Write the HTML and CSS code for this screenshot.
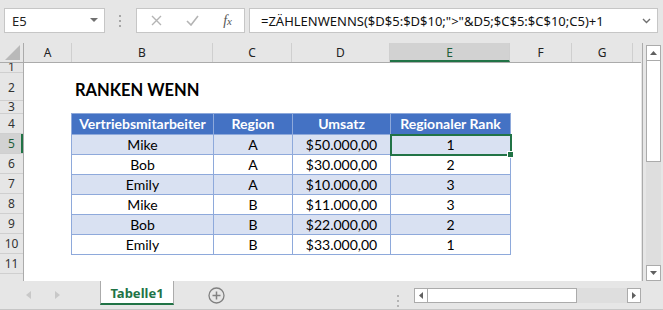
FILE: index.html
```html
<!DOCTYPE html>
<html lang="de">
<head>
    <meta charset="UTF-8">
    <meta name="viewport" content="width=device-width, initial-scale=1.0">
    <title>RANKEN WENN</title>
    <link rel="stylesheet" href="styles.css">
</head>
<body>
    <div class="toolbar">
        <div class="namebox">
            <span>E5</span>
            <svg width="8" height="5" viewBox="0 0 8 5"><path d="M0 0h8L4 4z" fill="#707070"/></svg>
        </div>
        <div class="grip">
            <svg width="3" height="12" viewBox="0 0 3 12"><rect x="0" y="0" width="2" height="2" fill="#a6a6a6"/><rect x="0" y="5" width="2" height="2" fill="#a6a6a6"/><rect x="0" y="10" width="2" height="2" fill="#a6a6a6"/></svg>
        </div>
        <div class="fbtns">
            <svg width="11" height="11" viewBox="0 0 11 11"><path d="M1 1L10 10M10 1L1 10" stroke="#b4b4b4" stroke-width="1.4"/></svg>
            <svg width="13" height="11" viewBox="0 0 13 11"><path d="M1 6L5 10L12 1" stroke="#b4b4b4" stroke-width="1.6" fill="none"/></svg>
            <span class="fx">f<small>x</small></span>
        </div>
        <div class="formula">
            <span>=ZÄHLENWENNS($D$5:$D$10;"&gt;"&amp;D5;$C$5:$C$10;C5)+1</span>
            <svg width="9" height="6" viewBox="0 0 9 6"><path d="M1 1L4.5 4.5L8 1" stroke="#707070" stroke-width="1.4" fill="none"/></svg>
        </div>
    </div>

    <div class="main">
        <div class="sheet">
            <div class="corner">
                <svg width="16" height="15" viewBox="0 0 16 15"><path d="M15 0V15H0z" fill="#b9b9b9"/></svg>
            </div>
            <div class="colheads">
                <div class="ch" style="width:48px">A</div>
                <div class="ch" style="width:141px">B</div>
                <div class="ch" style="width:79px">C</div>
                <div class="ch" style="width:98px">D</div>
                <div class="ch active" style="width:120px">E</div>
                <div class="ch" style="width:62px">F</div>
                <div class="ch" style="width:61px">G</div>
                <div class="ch last"></div>
            </div>
            <div class="rowheads">
                <div class="rh r1">1</div>
                <div class="rh r2">2</div>
                <div class="rh r3">3</div>
                <div class="rh">4</div>
                <div class="rh active">5</div>
                <div class="rh">6</div>
                <div class="rh">7</div>
                <div class="rh">8</div>
                <div class="rh">9</div>
                <div class="rh">10</div>
                <div class="rh">11</div>
                <div class="rh"></div>
            </div>
            <div class="cells">
                <div class="title">RANKEN WENN</div>
                <table class="data">
                    <colgroup>
                        <col style="width:142px">
                        <col style="width:79px">
                        <col style="width:98px">
                        <col style="width:120px">
                    </colgroup>
                    <tr class="head">
                        <th>Vertriebsmitarbeiter</th>
                        <th>Region</th>
                        <th>Umsatz</th>
                        <th>Regionaler Rank</th>
                    </tr>
                    <tr class="band">
                        <td>Mike</td><td>A</td><td>$50.000,00</td><td class="sel">1</td>
                    </tr>
                    <tr>
                        <td>Bob</td><td>A</td><td>$30.000,00</td><td>2</td>
                    </tr>
                    <tr class="band">
                        <td>Emily</td><td>A</td><td>$10.000,00</td><td>3</td>
                    </tr>
                    <tr>
                        <td>Mike</td><td>B</td><td>$11.000,00</td><td>3</td>
                    </tr>
                    <tr class="band">
                        <td>Bob</td><td>B</td><td>$22.000,00</td><td>2</td>
                    </tr>
                    <tr>
                        <td>Emily</td><td>B</td><td>$33.000,00</td><td>1</td>
                    </tr>
                </table>
            </div>
        </div>

        <div class="vscroll">
            <div class="sbtn">
                <svg width="7" height="4" viewBox="0 0 7 4"><path d="M0 4H7L3.5 0z" fill="#606060"/></svg>
            </div>
            <div class="vthumb"></div>
            <div class="track"></div>
            <div class="sbtn">
                <svg width="7" height="4" viewBox="0 0 7 4"><path d="M0 0H7L3.5 4z" fill="#606060"/></svg>
            </div>
        </div>
    </div>

    <div class="tabbar">
        <div class="navs">
            <svg width="5" height="8" viewBox="0 0 5 8"><path d="M5 0V8L0 4z" fill="#c8c8c8"/></svg>
            <svg width="5" height="8" viewBox="0 0 5 8"><path d="M0 0V8L5 4z" fill="#c8c8c8"/></svg>
        </div>
        <div class="tab">Tabelle1</div>
        <div class="addsheet">
            <svg width="17" height="17" viewBox="0 0 17 17"><circle cx="8.5" cy="8.5" r="7.5" fill="none" stroke="#808080" stroke-width="1.3"/><path d="M8.5 4.5V12.5M4.5 8.5H12.5" stroke="#808080" stroke-width="1.5"/></svg>
        </div>
        <div class="grip2">
            <svg width="3" height="12" viewBox="0 0 3 12"><rect x="0" y="0" width="2" height="2" fill="#b4b4b4"/><rect x="0" y="5" width="2" height="2" fill="#b4b4b4"/><rect x="0" y="10" width="2" height="2" fill="#b4b4b4"/></svg>
        </div>
        <div class="hscroll">
            <div class="sbtn">
                <svg width="4" height="7" viewBox="0 0 4 7"><path d="M4 0V7L0 3.5z" fill="#606060"/></svg>
            </div>
            <div class="hthumb"></div>
            <div class="track"></div>
            <div class="sbtn">
                <svg width="4" height="7" viewBox="0 0 4 7"><path d="M0 0V7L4 3.5z" fill="#606060"/></svg>
            </div>
        </div>
    </div>
</body>
</html>
```

FILE: styles.css
```css
body{
    margin: 0;
    width: 663px;
    height: 310px;
    overflow: hidden;
    background-color: #e6e6e6;
    font-family: "Noto Sans", "Open Sans", sans-serif;
    color: #222;
}

/* formula bar */
.toolbar{
    display: flex;
    align-items: flex-start;
    height: 43px;
    box-sizing: border-box;
    padding: 8px 0 0 4px;
}

.namebox, .fbtns, .formula{
    height: 25px;
    box-sizing: border-box;
    background-color: #fff;
    border: 1px solid #c6c6c6;
    display: flex;
    align-items: center;
}

.namebox{
    width: 101px;
    justify-content: space-between;
    padding: 0 6px 0 7px;
    font-size: 13px;
}

.grip{
    width: 31px;
    display: flex;
    justify-content: center;
    padding-top: 7px;
}

.fbtns{
    width: 109px;
    justify-content: space-between;
    padding: 0 12px 0 14px;
}

.fx{
    font-family: "Liberation Serif", serif;
    font-style: italic;
    font-size: 14px;
    color: #555;
}

.fx small{
    font-size: 11px;
}

.formula{
    width: 409px;
    margin-left: 4px;
    justify-content: space-between;
    padding: 0 6px 0 11px;
    font-size: 13px;
    color: #111;
}

/* sheet */
.main{
    display: flex;
    height: 238px;
}

.sheet{
    width: 642px;
    display: grid;
    grid-template-columns: 24px 617px;
    grid-template-rows: 20px 218px;
    border-right: 1px solid #ababab;
}

.corner{
    border-right: 1px solid #ababab;
    border-bottom: 1px solid #ababab;
    display: flex;
    align-items: flex-end;
    justify-content: flex-end;
    padding: 0 2px 2px 0;
}

.colheads{
    display: flex;
    border-bottom: 1px solid #ababab;
}

.ch{
    box-sizing: border-box;
    border-right: 1px solid #cfcfcf;
    font-size: 12px;
    text-align: center;
    line-height: 19px;
    height: 19px;
}

.ch.last{
    flex: 1;
    border-right: none;
}

.ch.active{
    background-color: #d2d2d2;
    border-bottom: 2px solid #217346;
    color: #1e5e3a;
}

.rowheads{
    border-right: 1px solid #ababab;
    overflow: hidden;
}

.rh{
    height: 20px;
    box-sizing: border-box;
    border-bottom: 1px solid #cfcfcf;
    font-size: 12px;
    text-align: center;
    line-height: 19px;
    color: #333;
    overflow: hidden;
}

.rh.r1{
    height: 10px;
    line-height: 8px;
}

.rh.r2{
    height: 28px;
    line-height: 30px;
}

.rh.r3{
    height: 13px;
    line-height: 12px;
}

.rh.active{
    background-color: #d2d2d2;
    box-shadow: inset -2px 0 0 #217346;
    color: #1e5e3a;
}

.cells{
    background-color: #fff;
    padding-left: 47px;
    overflow: hidden;
    font-family: Lato, "Noto Sans", sans-serif;
    font-size: 14px;
    color: #000;
}

.title{
    height: 50px;
    box-sizing: border-box;
    padding: 17px 0 0 4px;
    font-size: 16.5px;
    font-weight: bold;
}

.data{
    border-collapse: collapse;
    table-layout: fixed;
    width: 439px;
}

.data th, .data td{
    border: 1px solid #8ea9db;
    text-align: center;
    padding: 0;
    height: 19px;
    line-height: 18px;
}

.data th{
    background-color: #4472c4;
    color: #fff;
    font-weight: bold;
    height: 20px;
}

.data tr.band td{
    background-color: #d9e1f2;
}

.data td.sel{
    position: relative;
    outline: 2px solid #217346;
    outline-offset: -1px;
}

.data td.sel::after{
    content: "";
    position: absolute;
    right: -4px;
    bottom: -4px;
    width: 5px;
    height: 5px;
    background-color: #217346;
    border: 1px solid #fff;
}

/* scrollbars */
.vscroll{
    width: 15px;
    margin: 2px 0 0 3px;
    display: flex;
    flex-direction: column;
}

.sbtn{
    width: 15px;
    height: 16px;
    box-sizing: border-box;
    border: 1px solid #ababab;
    background-color: #fff;
    display: flex;
    align-items: center;
    justify-content: center;
    flex-shrink: 0;
}

.vthumb{
    height: 101px;
    box-sizing: border-box;
    border: 1px solid #ababab;
    border-top: none;
    background-color: #fff;
}

.track{
    flex: 1;
    background-color: #dedede;
}

/* sheet tabs */
.tabbar{
    display: flex;
    align-items: flex-start;
    height: 29px;
    box-sizing: border-box;
    border-bottom: 1px solid #c6c6c6;
    margin-bottom: 2px;
}

.navs{
    width: 100px;
    display: flex;
    gap: 24px;
    padding: 10px 0 0 26px;
    box-sizing: border-box;
}

.tab{
    width: 74px;
    height: 24px;
    box-sizing: border-box;
    background-color: #fff;
    border-left: 1px solid #ababab;
    border-right: 1px solid #ababab;
    border-bottom: 2px solid #217346;
    color: #217346;
    font-weight: bold;
    font-size: 13px;
    text-align: center;
    line-height: 24px;
}

.addsheet{
    margin-left: 34px;
    padding-top: 6px;
}

.grip2{
    margin-left: 172px;
    padding-top: 9px;
}

.hscroll{
    display: flex;
    width: 227px;
    height: 15px;
    margin: 7px 0 0 14px;
}

.hscroll .sbtn{
    width: 14px;
    height: 15px;
}

.hthumb{
    width: 149px;
    box-sizing: border-box;
    border: 1px solid #ababab;
    border-left: none;
    background-color: #fff;
}
```
